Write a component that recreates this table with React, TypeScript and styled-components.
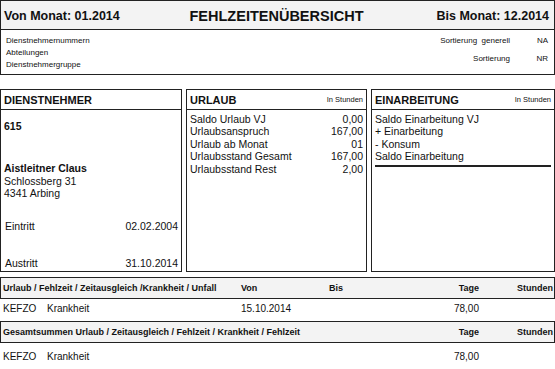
import styled, { createGlobalStyle } from "styled-components";

const GlobalStyle = createGlobalStyle`
  html, body {
    margin: 0;
    padding: 0;
    background: #fff;
  }
  body {
    font-family: "Liberation Sans", Arial, sans-serif;
    color: #111;
  }
`;

const Page = styled.div`
  width: 555px;
  height: 369px;
  overflow: hidden;
  display: flex;
  flex-direction: column;
`;

/* report header */
const HeadBox = styled.div`
  border: 1px solid #222;
  height: 73px;
  display: flex;
  flex-direction: column;
`;

const TitleBar = styled.div`
  height: 27px;
  background: #f3f3f3;
  border-bottom: 1px solid #222;
  display: grid;
  grid-template-columns: 1fr auto 1fr;
  align-items: center;
  padding: 1px 5px 0 3px;
  font-weight: 700;
  font-size: 12.5px;
`;

const PageTitle = styled.div`
  font-size: 14.5px;
`;

const RangeRight = styled.div`
  text-align: right;
`;

const InfoArea = styled.div`
  display: flex;
  justify-content: space-between;
  padding: 5px 6px 0 5px;
  font-size: 8px;
  line-height: 12px;
`;

const InfoList = styled.div`
  display: flex;
  flex-direction: column;
`;

const SortGrid = styled.div`
  display: grid;
  grid-template-columns: auto 38px;
  text-align: right;
`;

/* three detail boxes */
const BoxRow = styled.div`
  margin-top: 14px;
  display: grid;
  grid-template-columns: 182px 181px 1fr;
  gap: 4px;
  height: 183px;
`;

const Box = styled.div`
  border: 1px solid #222;
  display: flex;
  flex-direction: column;
`;

const BoxHead = styled.div`
  height: 19px;
  border-bottom: 1px solid #222;
  display: flex;
  align-items: center;
  justify-content: space-between;
  padding: 0 3px;
`;

const BoxTitle = styled.span`
  font-weight: 700;
  font-size: 11px;
`;

const Unit = styled.span`
  font-size: 7.5px;
`;

const BoxBody = styled.div`
  padding: 3px 3px 0 3px;
  font-size: 10.5px;
  line-height: 12.4px;
`;

const Line = styled.div<{ $bold?: boolean; $top?: number }>`
  display: flex;
  justify-content: space-between;
  font-weight: ${(p) => (p.$bold ? 700 : 400)};
  margin-top: ${(p) => p.$top ?? 0}px;
`;

const EntryRow = styled(Line)`
  padding-left: 1px;
`;

const SumList = styled.div`
  border-bottom: 2px solid #222;
  padding-bottom: 2px;
`;

/* absence table */
const columns = "238px 88px 1fr 60px 74px";

const Bar = styled.div<{ $top: number }>`
  margin-top: ${(p) => p.$top}px;
  height: 20px;
  border: 1px solid #222;
  background: #f3f3f3;
  display: grid;
  grid-template-columns: ${columns};
  align-items: center;
  padding: 0 1px 0 2px;
  font-weight: 700;
  font-size: 9px;
`;

const Row = styled.div<{ $height: number; $pad: number }>`
  height: ${(p) => p.$height}px;
  padding: ${(p) => p.$pad}px 2px 0 3px;
  box-sizing: border-box;
  display: grid;
  grid-template-columns: ${columns};
  font-size: 10px;
  line-height: 12px;
`;

const Wide = styled.div`
  grid-column: 1 / 4;
`;

const Right = styled.div`
  text-align: right;
`;

const Code = styled.span`
  display: inline-block;
  width: 44px;
`;

const urlaub = [
  ["Saldo Urlaub VJ", "0,00"],
  ["Urlaubsanspruch", "167,00"],
  ["Urlaub ab Monat", "01"],
  ["Urlaubsstand Gesamt", "167,00"],
  ["Urlaubsstand Rest", "2,00"],
];

const einarbeitung = [
  "Saldo Einarbeitung VJ",
  "+ Einarbeitung",
  "- Konsum",
  "Saldo Einarbeitung",
];

export default function App() {
  return (
    <Page>
      <GlobalStyle />
      <HeadBox>
        <TitleBar>
          <div>Von Monat: 01.2014</div>
          <PageTitle>FEHLZEITENÜBERSICHT</PageTitle>
          <RangeRight>Bis Monat: 12.2014</RangeRight>
        </TitleBar>
        <InfoArea>
          <InfoList>
            <span>Dienstnehmernummern</span>
            <span>Abteilungen</span>
            <span>Dienstnehmergruppe</span>
          </InfoList>
          <SortGrid>
            <span>Sortierung&nbsp; generell</span>
            <span>NA</span>
            <span>Sortierung</span>
            <span>NR</span>
          </SortGrid>
        </InfoArea>
      </HeadBox>

      <BoxRow>
        <Box>
          <BoxHead>
            <BoxTitle>DIENSTNEHMER</BoxTitle>
          </BoxHead>
          <BoxBody>
            <Line $bold $top={7}>
              615
            </Line>
            <Line $bold $top={30}>
              Aistleitner Claus
            </Line>
            <Line>Schlossberg 31</Line>
            <Line>4341 Arbing</Line>
            <EntryRow $top={20}>
              <span>Eintritt</span>
              <span>02.02.2004</span>
            </EntryRow>
            <EntryRow $top={25}>
              <span>Austritt</span>
              <span>31.10.2014</span>
            </EntryRow>
          </BoxBody>
        </Box>

        <Box>
          <BoxHead>
            <BoxTitle>URLAUB</BoxTitle>
            <Unit>In Stunden</Unit>
          </BoxHead>
          <BoxBody>
            {urlaub.map(([label, value]) => (
              <Line key={label}>
                <span>{label}</span>
                <span>{value}</span>
              </Line>
            ))}
          </BoxBody>
        </Box>

        <Box>
          <BoxHead>
            <BoxTitle>EINARBEITUNG</BoxTitle>
            <Unit>In Stunden</Unit>
          </BoxHead>
          <BoxBody>
            <SumList>
              {einarbeitung.map((label) => (
                <Line key={label}>{label}</Line>
              ))}
            </SumList>
          </BoxBody>
        </Box>
      </BoxRow>

      <Bar $top={5}>
        <div>Urlaub / Fehlzeit / Zeitausgleich /Krankheit / Unfall</div>
        <div>Von</div>
        <div>Bis</div>
        <Right>Tage</Right>
        <Right>Stunden</Right>
      </Bar>
      <Row $height={22} $pad={4}>
        <div>
          <Code>KEFZO</Code>Krankheit
        </div>
        <div>15.10.2014</div>
        <div />
        <Right>78,00</Right>
        <div />
      </Row>
      <Bar $top={0}>
        <Wide>Gesamtsummen Urlaub / Zeitausgleich / Fehlzeit / Krankheit / Fehlzeit</Wide>
        <Right>Tage</Right>
        <Right>Stunden</Right>
      </Bar>
      <Row $height={26} $pad={8}>
        <div>
          <Code>KEFZO</Code>Krankheit
        </div>
        <div />
        <div />
        <Right>78,00</Right>
        <div />
      </Row>
    </Page>
  );
}
